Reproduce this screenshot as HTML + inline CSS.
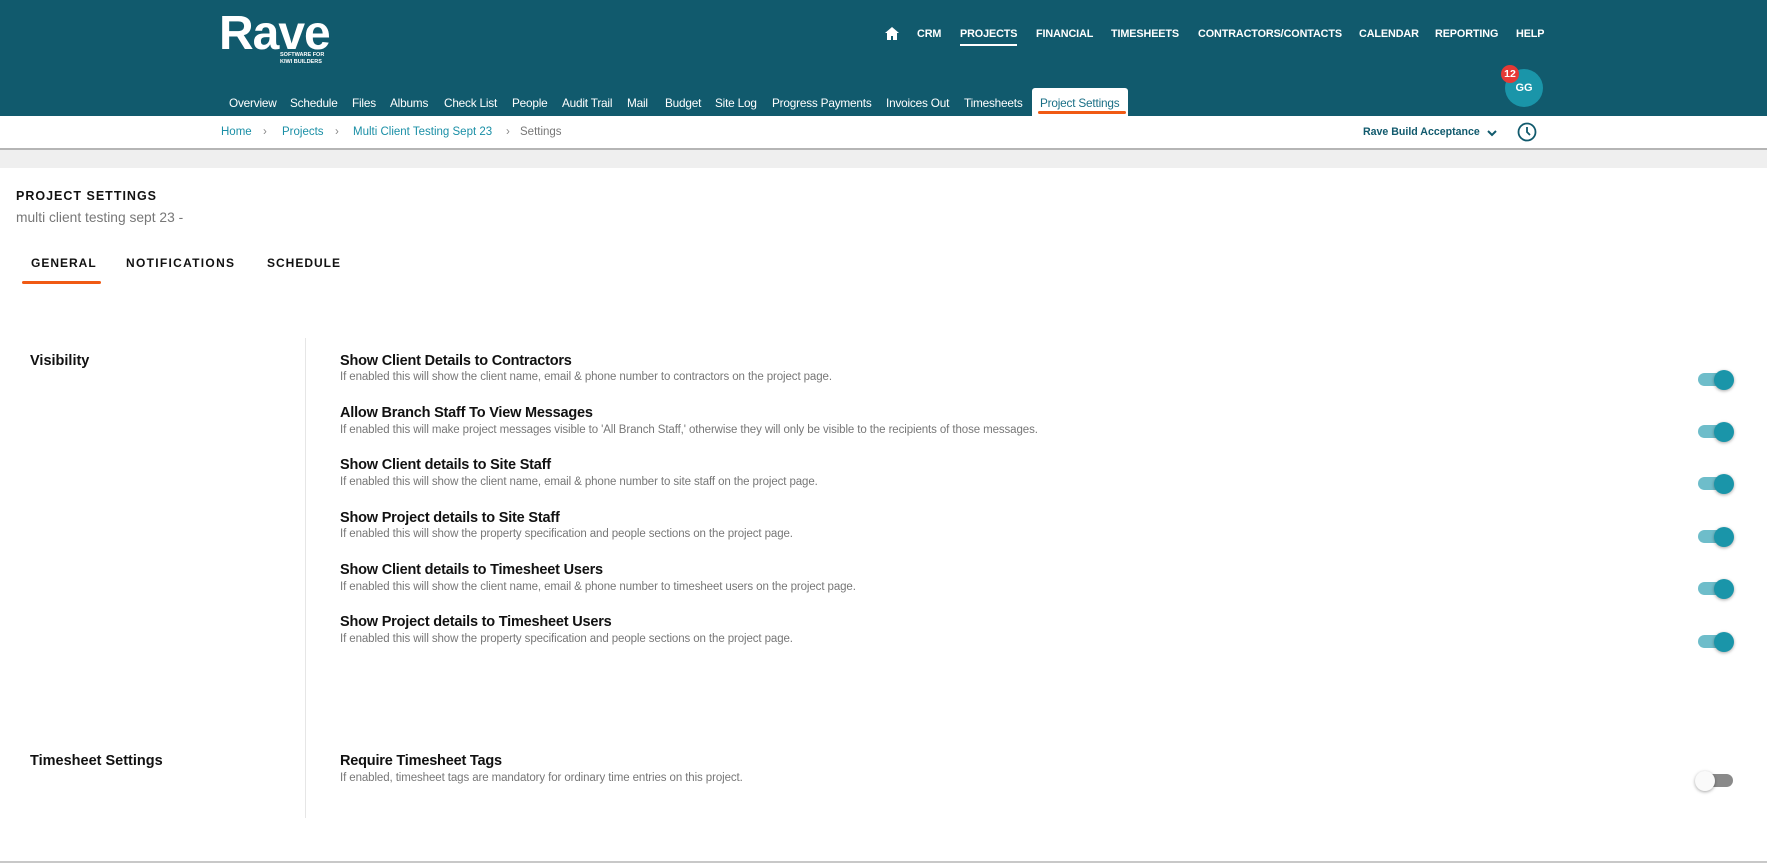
<!DOCTYPE html>
<html><head><meta charset="utf-8"><style>
*{margin:0;padding:0;box-sizing:border-box}
body{width:1767px;height:863px;overflow:hidden;background:#fff;font-family:"Liberation Sans",sans-serif;position:relative}
.a{position:absolute;white-space:nowrap}
.hdr{position:absolute;left:0;top:0;width:1767px;height:116px;background:#115a6d}
.top{font-size:10.8px;font-weight:bold;color:#fff;top:28px;letter-spacing:-0.1px}
.sub{font-size:11.8px;color:#fff;top:96px;letter-spacing:-0.2px}
.bc{font-size:11.5px;top:126px;color:#1a8fa6}
.t{font-size:14.5px;font-weight:bold;color:#111;left:340px;letter-spacing:-0.2px}
.d{font-size:11.5px;color:#777;left:340px;letter-spacing:-0.1px}
.tg{position:absolute;left:1698px;width:35px;height:13px;border-radius:7px;background:#6ebdca}
.tg::after{content:"";position:absolute;left:16px;top:-3.5px;width:20px;height:20px;border-radius:50%;background:#1a95a9;box-shadow:0 1px 3px rgba(0,0,0,.35)}
.off{background:#8a8a8a}
.off::after{left:-3px;background:#fafafa}
</style></head><body>
<div class="hdr"></div>
<div class="a" style="left:219px;top:6px;font-size:48px;font-weight:bold;color:#fff;letter-spacing:-1px">Rave</div>
<div class="a" style="left:280px;top:52px;font-size:5.5px;font-weight:bold;color:#fff;line-height:7px">SOFTWARE FOR<br>KIWI BUILDERS</div>
<svg class="a" style="left:885px;top:27px" width="14" height="13" viewBox="0 0 14 13"><path d="M7 0L0 6h2v7h4V9h2v4h4V6h2z" fill="#fff"/></svg>
<div class="a top" style="left:917px">CRM</div>
<div class="a top" style="left:960px">PROJECTS</div>
<div class="a" style="left:960px;top:44px;width:57px;height:2px;background:#fff"></div>
<div class="a top" style="left:1036px">FINANCIAL</div>
<div class="a top" style="left:1111px">TIMESHEETS</div>
<div class="a top" style="left:1198px">CONTRACTORS/CONTACTS</div>
<div class="a top" style="left:1359px">CALENDAR</div>
<div class="a top" style="left:1435px">REPORTING</div>
<div class="a top" style="left:1516px">HELP</div>
<div class="a sub" style="left:229px">Overview</div>
<div class="a sub" style="left:290px">Schedule</div>
<div class="a sub" style="left:352px">Files</div>
<div class="a sub" style="left:390px">Albums</div>
<div class="a sub" style="left:444px">Check List</div>
<div class="a sub" style="left:512px">People</div>
<div class="a sub" style="left:562px">Audit Trail</div>
<div class="a sub" style="left:627px">Mail</div>
<div class="a sub" style="left:665px">Budget</div>
<div class="a sub" style="left:715px">Site Log</div>
<div class="a sub" style="left:772px">Progress Payments</div>
<div class="a sub" style="left:886px">Invoices Out</div>
<div class="a sub" style="left:964px">Timesheets</div>
<div class="a" style="left:1032px;top:88px;width:96px;height:28px;background:#fff;border-radius:3px 3px 0 0"></div>
<div class="a sub" style="left:1040px;color:#1a6f86">Project Settings</div>
<div class="a" style="left:1038px;top:111px;width:88px;height:3px;background:#f05a14;border-radius:2px"></div>
<div class="a" style="left:1505px;top:69px;width:38px;height:38px;border-radius:50%;background:#1a95a9;color:#fff;font-size:11px;font-weight:bold;text-align:center;line-height:38px">GG</div>
<div class="a" style="left:1501px;top:65px;width:18px;height:18px;border-radius:50%;background:#e53935;color:#fff;font-size:10.5px;font-weight:bold;text-align:center;line-height:18px">12</div>
<div class="a bc" style="left:221px">Home</div>
<div class="a bc" style="left:263px;color:#888">›</div>
<div class="a bc" style="left:282px">Projects</div>
<div class="a bc" style="left:335px;color:#888">›</div>
<div class="a bc" style="left:353px">Multi Client Testing Sept 23</div>
<div class="a bc" style="left:506px;color:#888">›</div>
<div class="a bc" style="left:520px;color:#777">Settings</div>
<div class="a" style="left:1363px;top:126px;font-size:10.6px;font-weight:bold;color:#115a6d">Rave Build Acceptance</div>
<svg class="a" style="left:1487px;top:129px" width="10" height="8" viewBox="0 0 10 8"><path d="M1 2l4 4 4-4" stroke="#115a6d" stroke-width="2" fill="none"/></svg>
<svg class="a" style="left:1517px;top:122px" width="20" height="20" viewBox="0 0 20 20"><circle cx="10" cy="10" r="8.5" stroke="#115a6d" stroke-width="1.8" fill="none"/><path d="M10 5v5l3 3" stroke="#115a6d" stroke-width="1.8" fill="none"/></svg>
<div class="a" style="left:0;top:148px;width:1767px;height:2px;background:#b5b5b5"></div>
<div class="a" style="left:0;top:150px;width:1767px;height:18px;background:#efefef"></div>
<div class="a" style="left:16px;top:189px;font-size:12.5px;font-weight:bold;letter-spacing:1px;color:#111">PROJECT SETTINGS</div>
<div class="a" style="left:16px;top:210px;font-size:13.8px;color:#777">multi client testing sept 23 -</div>
<div class="a" style="left:31px;top:256px;font-size:12px;font-weight:bold;letter-spacing:1px;color:#111">GENERAL</div>
<div class="a" style="left:126px;top:256px;font-size:12px;font-weight:bold;letter-spacing:1.3px;color:#111">NOTIFICATIONS</div>
<div class="a" style="left:267px;top:256px;font-size:12px;font-weight:bold;letter-spacing:1px;color:#111">SCHEDULE</div>
<div class="a" style="left:22px;top:281px;width:79px;height:3px;background:#f05a14;border-radius:2px"></div>
<div class="a" style="left:305px;top:338px;width:1px;height:480px;background:#e6e6e6"></div>
<div class="a" style="left:30px;top:353px;font-size:14.5px;font-weight:bold;color:#111">Visibility</div>
<div class="a t" style="top:353px">Show Client Details to Contractors</div>
<div class="a d" style="top:371px">If enabled this will show the client name, email &amp; phone number to contractors on the project page.</div>
<div class="tg" style="top:373px"></div>
<div class="a t" style="top:405px">Allow Branch Staff To View Messages</div>
<div class="a d" style="top:424px">If enabled this will make project messages visible to 'All Branch Staff,' otherwise they will only be visible to the recipients of those messages.</div>
<div class="tg" style="top:425px"></div>
<div class="a t" style="top:457px">Show Client details to Site Staff</div>
<div class="a d" style="top:476px">If enabled this will show the client name, email &amp; phone number to site staff on the project page.</div>
<div class="tg" style="top:477px"></div>
<div class="a t" style="top:510px">Show Project details to Site Staff</div>
<div class="a d" style="top:528px">If enabled this will show the property specification and people sections on the project page.</div>
<div class="tg" style="top:530px"></div>
<div class="a t" style="top:562px">Show Client details to Timesheet Users</div>
<div class="a d" style="top:581px">If enabled this will show the client name, email &amp; phone number to timesheet users on the project page.</div>
<div class="tg" style="top:582px"></div>
<div class="a t" style="top:614px">Show Project details to Timesheet Users</div>
<div class="a d" style="top:633px">If enabled this will show the property specification and people sections on the project page.</div>
<div class="tg" style="top:635px"></div>
<div class="a" style="left:30px;top:753px;font-size:14.5px;font-weight:bold;color:#111">Timesheet Settings</div>
<div class="a t" style="top:753px">Require Timesheet Tags</div>
<div class="a d" style="top:772px">If enabled, timesheet tags are mandatory for ordinary time entries on this project.</div>
<div class="tg off" style="top:774px"></div>
<div class="a" style="left:0;top:861px;width:1767px;height:2px;background:#c8c8c8"></div>
</body></html>
